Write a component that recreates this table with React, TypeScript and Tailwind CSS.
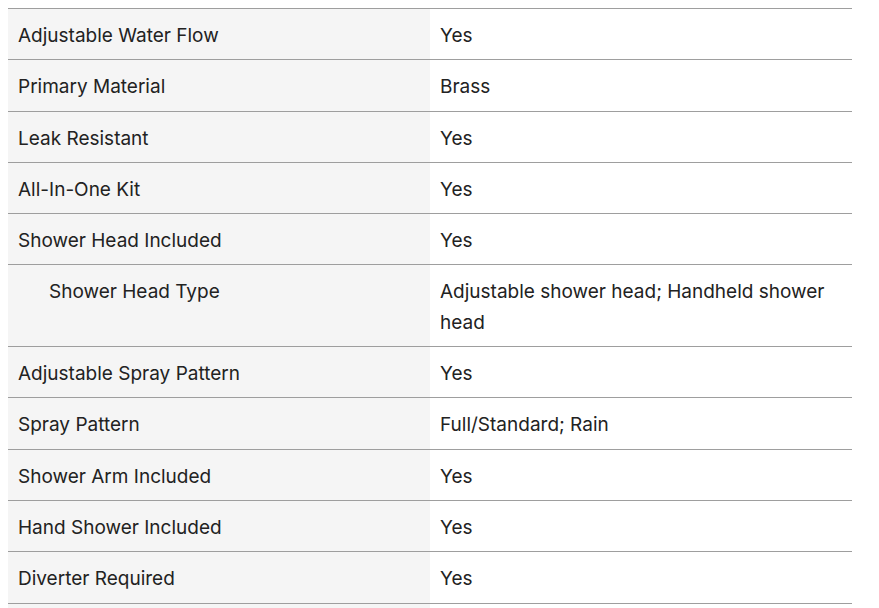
import React from 'react';

type Spec = { label: string; value: string; sub?: boolean };

const specs: Spec[] = [
    { label: 'Adjustable Water Flow', value: 'Yes' },
    { label: 'Primary Material', value: 'Brass' },
    { label: 'Leak Resistant', value: 'Yes' },
    { label: 'All-In-One Kit', value: 'Yes' },
    { label: 'Shower Head Included', value: 'Yes' },
    { label: 'Shower Head Type', value: 'Adjustable shower head; Handheld shower head', sub: true },
    { label: 'Adjustable Spray Pattern', value: 'Yes' },
    { label: 'Spray Pattern', value: 'Full/Standard; Rain' },
    { label: 'Shower Arm Included', value: 'Yes' },
    { label: 'Hand Shower Included', value: 'Yes' },
    { label: 'Diverter Required', value: 'Yes' },
    { label: '\u00a0', value: '\u00a0' },
];

export default function App() {
    return (
        <div className="min-h-screen bg-white pt-2 pl-2 text-[#222] text-[19px] leading-[30.3px]" style={{ fontFamily: 'Inter, sans-serif' }}>
            <div className="w-[844px] border-t border-[#9e9e9e]">
                {specs.map((s, i) => (
                    <div key={i} className="grid grid-cols-2 border-b border-[#9e9e9e]">
                        <div className={`bg-[#f5f5f5] pt-[12px] pb-[8px] pr-2 ${s.sub ? 'pl-[41px]' : 'pl-[10px]'}`}>{s.label}</div>
                        <div className="bg-white pt-[12px] pb-[8px] px-[10px]">{s.value}</div>
                    </div>
                ))}
            </div>
        </div>
    );
}
